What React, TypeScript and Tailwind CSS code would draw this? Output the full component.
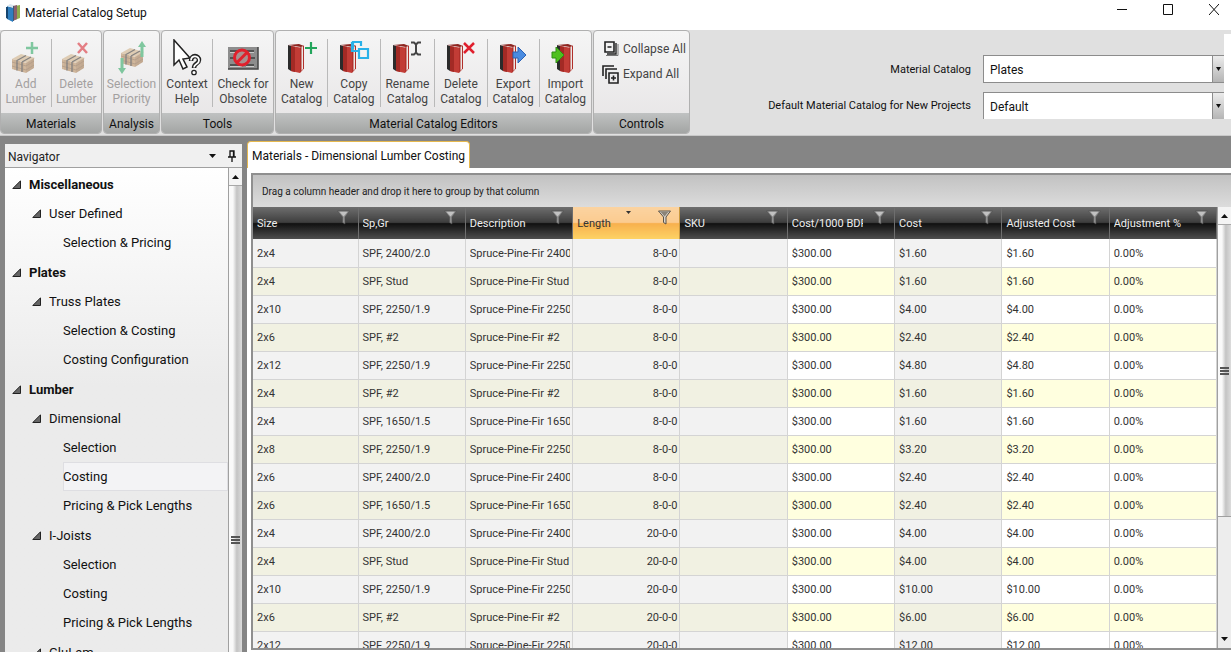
import type { ReactNode } from 'react'
import clsx from 'clsx'

type Row = { size: string; grade: string; desc: string; length: string; cost: string }

const rows: Row[] = [
  { size: '2x4', grade: 'SPF, 2400/2.0', desc: 'Spruce-Pine-Fir 2400/2.0', length: '8-0-0', cost: '$1.60' },
  { size: '2x4', grade: 'SPF, Stud', desc: 'Spruce-Pine-Fir Stud', length: '8-0-0', cost: '$1.60' },
  { size: '2x10', grade: 'SPF, 2250/1.9', desc: 'Spruce-Pine-Fir 2250/1.9', length: '8-0-0', cost: '$4.00' },
  { size: '2x6', grade: 'SPF, #2', desc: 'Spruce-Pine-Fir #2', length: '8-0-0', cost: '$2.40' },
  { size: '2x12', grade: 'SPF, 2250/1.9', desc: 'Spruce-Pine-Fir 2250/1.9', length: '8-0-0', cost: '$4.80' },
  { size: '2x4', grade: 'SPF, #2', desc: 'Spruce-Pine-Fir #2', length: '8-0-0', cost: '$1.60' },
  { size: '2x4', grade: 'SPF, 1650/1.5', desc: 'Spruce-Pine-Fir 1650/1.5', length: '8-0-0', cost: '$1.60' },
  { size: '2x8', grade: 'SPF, 2250/1.9', desc: 'Spruce-Pine-Fir 2250/1.9', length: '8-0-0', cost: '$3.20' },
  { size: '2x6', grade: 'SPF, 2400/2.0', desc: 'Spruce-Pine-Fir 2400/2.0', length: '8-0-0', cost: '$2.40' },
  { size: '2x6', grade: 'SPF, 1650/1.5', desc: 'Spruce-Pine-Fir 1650/1.5', length: '8-0-0', cost: '$2.40' },
  { size: '2x4', grade: 'SPF, 2400/2.0', desc: 'Spruce-Pine-Fir 2400/2.0', length: '20-0-0', cost: '$4.00' },
  { size: '2x4', grade: 'SPF, Stud', desc: 'Spruce-Pine-Fir Stud', length: '20-0-0', cost: '$4.00' },
  { size: '2x10', grade: 'SPF, 2250/1.9', desc: 'Spruce-Pine-Fir 2250/1.9', length: '20-0-0', cost: '$10.00' },
  { size: '2x6', grade: 'SPF, #2', desc: 'Spruce-Pine-Fir #2', length: '20-0-0', cost: '$6.00' },
  { size: '2x12', grade: 'SPF, 2250/1.9', desc: 'Spruce-Pine-Fir 2250/1.9', length: '20-0-0', cost: '$12.00' },
]

const columns = ['Size', 'Sp,Gr', 'Description', 'Length', 'SKU', 'Cost/1000 BDFT', 'Cost', 'Adjusted Cost', 'Adjustment %']

const tree = [
  { label: 'Miscellaneous', groups: [{ label: 'User Defined', items: ['Selection & Pricing'] }] },
  { label: 'Plates', groups: [{ label: 'Truss Plates', items: ['Selection & Costing', 'Costing Configuration'] }] },
  {
    label: 'Lumber',
    groups: [
      { label: 'Dimensional', items: ['Selection', 'Costing', 'Pricing & Pick Lengths'] },
      { label: 'I-Joists', items: ['Selection', 'Costing', 'Pricing & Pick Lengths'] },
      { label: 'GluLam', items: [] },
    ],
  },
]

function AppIcon() {
  return (
    <svg width="15" height="18" viewBox="0 0 15 18">
      <path d="M9 2l5-1v13l-5 2z" fill="#8fae4e" />
      <path d="M7 2l4-1v14l-4 2z" fill="#8d5f6b" />
      <path d="M4 1l4 1v15l-4-1z" fill="#3d5a78" />
      <path d="M1 2l6 2v14l-6-3z" fill="#2f7fc0" />
      <path d="M0 3l2 0v12l-2-1z" fill="#16456f" />
      <path d="M1 2l3-2 3 1v3z" fill="#d8e6f0" />
    </svg>
  )
}

function Boards() {
  return (
    <g>
      <path d="M0 5l9-5 14 4-8 5z" fill="#cfae82" />
      <path d="M0 5l14 4v10l-14-4z" fill="#b88a58" />
      <path d="M14 9l8-5v10l-8 5z" fill="#a3764a" />
      <path d="M0 8l14 4 8-5M0 12l14 4 8-5" stroke="#7a5533" strokeWidth=".8" fill="none" />
      <path d="M3 6v10M7 7v10M11 8v10M17 8v9M20 6v9" stroke="#92683d" strokeWidth=".7" />
      <path d="M5 6.500l9-5M5 6v10.500M10 8l9-5M10 8v10" stroke="#2f2b28" strokeWidth="1.400" fill="none" />
    </g>
  )
}

function AddLumberIcon() {
  return (
    <svg width="30" height="34" viewBox="0 0 30 34">
      <g transform="translate(1 13)"><Boards /></g>
      <path d="M21 1v12M15 7h12" stroke="#23a55c" strokeWidth="2.500" />
    </svg>
  )
}

function DeleteLumberIcon() {
  return (
    <svg width="30" height="34" viewBox="0 0 30 34">
      <g transform="translate(1 13)"><Boards /></g>
      <path d="M17 2l9 10M26 2l-9 10" stroke="#d8202a" strokeWidth="2.500" />
    </svg>
  )
}

function PriorityIcon() {
  return (
    <svg width="30" height="34" viewBox="0 0 30 34">
      <g transform="translate(4 7)"><Boards /></g>
      <path d="M25 0l4 6h-2.500v10h-3V6H21z" fill="#23a55c" />
      <path d="M5 33l-4-6h2.500V17h3v10H9z" fill="#23a55c" />
    </svg>
  )
}

function ContextIcon() {
  return (
    <svg width="30" height="38" viewBox="0 0 30 38">
      <path d="M2 1v25l5-5 4 9 4-2-4-8 7-1z" fill="#fff" stroke="#222" strokeWidth="1.500" />
      <path d="M19 22c0-7 8-6 8-1 0 4-5 3-5 8" fill="none" stroke="#222" strokeWidth="4.500" />
      <path d="M19 21.500c0-6 8-5 8 0 0 4-5 3-5 7" fill="none" stroke="#fff" strokeWidth="1.800" />
      <circle cx="22" cy="33.500" r="2.200" fill="#fff" stroke="#222" strokeWidth="1.300" />
    </svg>
  )
}

function ObsoleteIcon() {
  return (
    <svg width="32" height="24" viewBox="0 0 32 24">
      <path d="M1 1h30v22H1z" fill="#8d8d8d" />
      <path d="M31 1v22H1" fill="none" stroke="#444" strokeWidth="1.500" />
      <path d="M3 5h11M17 5h10M3 12h8M21 12h7M3 19h12M19 19h8" stroke="#3f3f3f" strokeWidth="1.500" />
      <path d="M3 6.500h11M17 6.500h10M3 20.500h12M19 20.500h8" stroke="#c9c9c9" />
      <circle cx="15" cy="11.500" r="7.500" fill="#a98f8f" stroke="#e0202c" strokeWidth="3" />
      <path d="M20 6.500l-10 10" stroke="#e0202c" strokeWidth="3" />
    </svg>
  )
}

function Book({ x = 0, children }: { x?: number; children?: ReactNode }) {
  return (
    <svg width="32" height="34" viewBox="0 0 32 34">
      <g transform={`translate(${x} 0)`}>
        <path d="M2 4l3 1v25l-3-2z" fill="#2b2b2b" />
        <path d="M2 4l11-1 5 2-3 1z" fill="#8d2520" />
        <path d="M5 5l9 1.500V32L5 30z" fill="#c23c36" />
        <path d="M5 5l4 .7V31l-4-1z" fill="#a32a25" />
        <path d="M14 6.500l4-2v23L14 32z" fill="#b1302b" />
        <path d="M15.500 6l1.500-.8V28l-1.500 1.700z" fill="#ece7e5" />
      </g>
      {children}
    </svg>
  )
}

function CollapseIcon() {
  return (
    <svg width="15" height="16" viewBox="0 0 15 16" fill="none" stroke="#222" strokeWidth="1.600">
      <path d="M1 1h9v10H1zM3.500 6h4" />
      <path d="M12 2v11H3" strokeWidth="1.400" />
      <path d="M2 14.500h12V3" stroke="#777" strokeWidth="1" />
    </svg>
  )
}

function ExpandIcon() {
  return (
    <svg width="17" height="19" viewBox="0 0 17 19" fill="none" stroke="#222" strokeWidth="1.600">
      <path d="M1 11V1h11M4 14V4h11" />
      <path d="M7 8h9v10H7zM9 13h5M11.500 10.500v5" />
    </svg>
  )
}

function Funnel({ active }: { active?: boolean }) {
  return (
    <svg width="13" height="15" viewBox="0 0 13 15">
      <path
        d="M.5 1h12L8 7v7l-2.500-1.500V7z"
        fill={active ? '#d9d4cc' : '#8f8f8f'}
        stroke={active ? '#5b5348' : '#4d4d4d'}
        strokeWidth={active ? 1 : 0.6}
      />
      <path d="M2.500 1.800h8L6.600 6.500z" fill={active ? '#8a8378' : '#c2c2c2'} />
    </svg>
  )
}

function Tool({ icon, lines, disabled }: { icon: ReactNode; lines: [string, string]; disabled?: boolean }) {
  return (
    <button
      disabled={disabled}
      className="flex flex-auto flex-col items-center border-l border-[#b9b9b9] text-[12px] leading-[15px] whitespace-nowrap text-[#444] first:border-l-0 disabled:text-[#a3a0a0]"
    >
      <span className={clsx('flex h-[38px] items-center', disabled && 'opacity-55')}>{icon}</span>
      <span>{lines[0]}</span>
      <span>{lines[1]}</span>
    </button>
  )
}

function RibbonGroup({ label, className, children }: { label: string; className: string; children: ReactNode }) {
  return (
    <section
      className={clsx(
        'flex shrink-0 flex-col overflow-hidden rounded-sm border border-[#b0b0b0] bg-linear-to-b from-[#f5f5f5] to-[#e6e4e5]',
        className,
      )}
    >
      <div className="flex flex-1 pt-2 pb-1.5">{children}</div>
      <h2 className="bg-linear-to-b from-[#c0c2c2] to-[#a3a5a4] pt-0.5 text-center text-[12px] leading-[18px] text-[#111]">
        {label}
      </h2>
    </section>
  )
}

function Ribbon() {
  return (
    <div className="flex shrink-0 gap-px border-b border-[#c8c8c8] bg-[#e0e0e0] pb-px">
      <RibbonGroup label="Materials" className="w-[102px]">
        <Tool icon={<AddLumberIcon />} lines={['Add', 'Lumber']} disabled />
        <Tool icon={<DeleteLumberIcon />} lines={['Delete', 'Lumber']} disabled />
      </RibbonGroup>
      <RibbonGroup label="Analysis" className="w-[57px]">
        <Tool icon={<PriorityIcon />} lines={['Selection', 'Priority']} disabled />
      </RibbonGroup>
      <RibbonGroup label="Tools" className="w-[113px]">
        <Tool icon={<ContextIcon />} lines={['Context', 'Help']} />
        <Tool icon={<ObsoleteIcon />} lines={['Check for', 'Obsolete']} />
      </RibbonGroup>
      <RibbonGroup label="Material Catalog Editors" className="w-[317px]">
        <Tool
          lines={['New', 'Catalog']}
          icon={<Book><path d="M25 1v12M19 7h12" stroke="#23a55c" strokeWidth="2.200" /></Book>}
        />
        <Tool
          lines={['Copy', 'Catalog']}
          icon={
            <Book>
              <path d="M15 8V1h8v4M14 1v9h6" fill="none" stroke="#29b1e8" strokeWidth="2.200" />
              <path d="M21 8h9v9h-9z" fill="#f2f2f2" stroke="#29b1e8" strokeWidth="2.200" />
            </Book>
          }
        />
        <Tool
          lines={['Rename', 'Catalog']}
          icon={
            <Book>
              <path d="M20 1.500h3l2 2 2-2h3M20 13.500h3l2-2 2 2h3M25 3v9" fill="none" stroke="#444" strokeWidth="2" />
            </Book>
          }
        />
        <Tool
          lines={['Delete', 'Catalog']}
          icon={<Book><path d="M19 2l10 10M29 2L19 12" stroke="#e01f2d" strokeWidth="2.500" /></Book>}
        />
        <Tool
          lines={['Export', 'Catalog']}
          icon={<Book x={1}><path d="M16 11h5V6l8 8-8 8v-5h-5z" fill="#4a8be0" stroke="#2c62b4" /></Book>}
        />
        <Tool
          lines={['Import', 'Catalog']}
          icon={<Book x={6}><path d="M3 11h4V6l8 8-8 8v-5H3z" fill="#4fc01f" stroke="#2f8f14" /></Book>}
        />
      </RibbonGroup>
      <RibbonGroup label="Controls" className="w-[97px]">
        <div className="flex flex-col gap-[5px] pl-2">
          <button className="flex h-5 items-center gap-1 text-[12px] whitespace-nowrap text-[#444]">
            <span className="w-[17px] shrink-0 pl-0.5"><CollapseIcon /></span>
            Collapse All
          </button>
          <button className="flex h-5 items-center gap-1 text-[12px] whitespace-nowrap text-[#444]">
            <ExpandIcon />
            Expand All
          </button>
        </div>
      </RibbonGroup>
      <form className="mt-1 mb-[15px] flex flex-1 items-end justify-end border-r-[7px] border-white text-[12px] text-[#111]">
        <div className="grid grid-cols-[auto_241px] items-center gap-x-3 gap-y-[9px]">
          <label htmlFor="catalog" className="pt-0.5 text-right text-[11px]">Material Catalog</label>
          <Picker id="catalog" value="Plates" className="h-7 border-b" />
          <label htmlFor="default-catalog" className="pt-0.5 text-right text-[11px]">
            Default Material Catalog for New Projects
          </label>
          <Picker id="default-catalog" value="Default" className="h-[27px]" />
        </div>
      </form>
    </div>
  )
}

function Picker({ id, value, className }: { id: string; value: string; className: string }) {
  return (
    <div className={clsx('flex border-t border-l border-[#8c8c8c] bg-white', className)}>
      <select id={id} defaultValue={value} className="min-w-0 flex-1 appearance-none bg-transparent px-1.5 pt-0.5 outline-none">
        <option>{value}</option>
      </select>
      <span className="pointer-events-none flex w-3 items-center justify-center border-l border-[#8c8c8c] bg-linear-to-b from-[#ececec] to-[#b5b5b5]">
        <svg width="5" height="4" viewBox="0 0 5 4"><path d="M0 0h5L2.500 4z" fill="#111" /></svg>
      </span>
    </div>
  )
}

function Triangle() {
  return (
    <svg width="9" height="9" viewBox="0 0 9 9" className="shrink-0">
      <path d="M8.500.8v7.700H.8z" fill="#666" stroke="#222" />
    </svg>
  )
}

function ScrollBar({ thumb, down }: { thumb: string; down?: boolean }) {
  return (
    <div className="flex w-3.5 shrink-0 flex-col border-l border-[#a0a0a0] bg-[#ededed]">
      <button aria-label="Scroll up" className="flex h-[18px] shrink-0 items-center justify-center border-b border-[#a8a8a8] bg-[#f4f4f4]">
        <svg width="7" height="4" viewBox="0 0 7 4"><path d="M0 4h7L3.500 0z" fill="#111" /></svg>
      </button>
      <div
        className={clsx(
          'flex shrink-0 flex-col items-center justify-center gap-px border-b border-[#a0a0a0] bg-linear-to-r from-[#fafafa] from-30% via-[#c4c4c4] via-60% to-[#dcdcdc]',
          thumb,
        )}
      >
        <span className="h-0.5 w-[9px] bg-[#555]" />
        <span className="h-0.5 w-[9px] bg-[#555]" />
        <span className="h-0.5 w-[9px] bg-[#555]" />
      </div>
      {down && (
        <button aria-label="Scroll down" className="mt-auto flex h-[18px] shrink-0 items-center justify-center">
          <svg width="7" height="4" viewBox="0 0 7 4"><path d="M0 0h7L3.500 4z" fill="#111" /></svg>
        </button>
      )}
    </div>
  )
}

function Navigator() {
  return (
    <aside className="mt-2 flex w-[237px] shrink-0 flex-col bg-[#f0f0f0]">
      <header className="flex h-6 shrink-0 items-center border-b border-[#a0a0a0] pr-1.5 pl-[3px] text-[12px] text-[#222]">
        <h2 className="flex-1 pt-0.5">Navigator</h2>
        <button aria-label="Window position">
          <svg width="7" height="4" viewBox="0 0 7 4"><path d="M0 0h7L3.500 4z" fill="#111" /></svg>
        </button>
        <button aria-label="Pin" className="ml-3">
          <svg width="8" height="12" viewBox="0 0 8 12" fill="none" stroke="#111">
            <path d="M2 6.500V1h4v5.500M0 7h8M4 7v5M5.500 1v6" strokeWidth="1.300" />
          </svg>
        </button>
      </header>
      <div className="flex min-h-0 flex-1">
        <nav className="flex-1 overflow-hidden bg-linear-to-b from-white to-[#ebebeb] to-45% pt-0.5 text-[13px] leading-[29px] text-[#111]">
          <ul>
            {tree.map((section) => (
              <li key={section.label}>
                <div className="flex items-center gap-2 pl-[7px] font-bold">
                  <Triangle />
                  {section.label}
                </div>
                <ul>
                  {section.groups.map((group) => (
                    <li key={group.label} className="pb-px">
                      <div className="flex items-center gap-2 pl-[27px]">
                        <Triangle />
                        {group.label}
                      </div>
                      <ul className="pl-[58px]">
                        {group.items.map((item) => (
                          <li key={item}>
                            <a
                              href="#"
                              className={clsx(
                                'block',
                                group.label === 'Dimensional' &&
                                  item === 'Costing' &&
                                  'bg-[#f3f3f5] inset-ring inset-ring-[#dedee2]',
                              )}
                            >
                              {item}
                            </a>
                          </li>
                        ))}
                      </ul>
                    </li>
                  ))}
                </ul>
              </li>
            ))}
          </ul>
        </nav>
        <ScrollBar thumb="h-[708px]" />
      </div>
    </aside>
  )
}

function CostTable() {
  return (
    <table className="w-full table-fixed border-collapse text-[11px] text-[#333]">
      <thead>
        <tr className="h-8">
          {columns.map((name) => {
            const sorted = name === 'Length'
            return (
              <th
                key={name}
                className={clsx(
                  'border-r p-0 font-normal first:w-[105px]',
                  sorted
                    ? 'border-[#c9983e] bg-[linear-gradient(#fbd3a0,#fbcb90_48%,#f7b04e_52%,#fdd264)] text-[#333]'
                    : 'border-[#6e6e6e] bg-[linear-gradient(#6e6e6e,#3e3e3e_48%,#111_52%,#4e4e4e)] text-[#eee]',
                )}
              >
                <div className="relative flex h-8 items-start gap-2.5 pr-2 pl-1">
                  <span className="min-w-0 flex-1 overflow-hidden pt-[9px] text-left whitespace-nowrap">{name}</span>
                  {sorted && (
                    <svg width="5" height="3" viewBox="0 0 5 3" className="absolute top-1 left-1/2">
                      <path d="M0 0h5L2.500 3z" fill="#333" />
                    </svg>
                  )}
                  <button aria-label={`Filter ${name}`} className="mt-[3px] shrink-0">
                    <Funnel active={sorted} />
                  </button>
                </div>
              </th>
            )
          })}
        </tr>
      </thead>
      <tbody>
        {rows.map((row, i) => {
          const odd = i % 2 === 1
          const locked = odd ? 'bg-[#f1f1e2]' : 'bg-[#f2f2f2]'
          const open = odd ? 'bg-[#ffffdf]' : 'bg-white'
          const cell = 'overflow-hidden border-r border-b border-[#d4d4d4] pt-0.5 pr-0.5 pb-0 pl-1 whitespace-nowrap'
          return (
            <tr key={i} className="h-7">
              <td className={clsx(cell, locked)}>{row.size}</td>
              <td className={clsx(cell, locked)}>{row.grade}</td>
              <td className={clsx(cell, locked)}>
                <div className="overflow-hidden">{row.desc}</div>
              </td>
              <td className={clsx(cell, locked, 'text-right')}>{row.length}</td>
              <td className={clsx(cell, locked)} />
              <td className={clsx(cell, open)}>$300.00</td>
              <td className={clsx(cell, locked)}>{row.cost}</td>
              <td className={clsx(cell, open)}>{row.cost}</td>
              <td className={clsx(cell, open)}>0.00%</td>
            </tr>
          )
        })}
      </tbody>
    </table>
  )
}

export default function App() {
  return (
    <div className="flex h-screen flex-col overflow-hidden bg-[#858585] font-[Roboto,'Open_Sans',sans-serif]">
      <header className="flex h-[30px] shrink-0 items-start bg-white pt-1 pr-3 pl-1.5">
        <AppIcon />
        <h1 className="flex-1 pl-1 text-[12px] leading-[18px] text-[#111]">Material Catalog Setup</h1>
        <div className="flex gap-9">
          <button aria-label="Minimize">
            <svg width="10" height="11" viewBox="0 0 10 11"><path d="M0 5.500h10" stroke="#111" /></svg>
          </button>
          <button aria-label="Maximize">
            <svg width="10" height="11" viewBox="0 0 10 11"><path d="M.5.500h9v10h-9z" fill="none" stroke="#111" /></svg>
          </button>
          <button aria-label="Close">
            <svg width="10" height="11" viewBox="0 0 10 11"><path d="M0 0l10 11M10 0L0 11" stroke="#111" /></svg>
          </button>
        </div>
      </header>
      <Ribbon />
      <div className="flex min-h-0 flex-1 gap-[5px] pl-[5px]">
        <Navigator />
        <main className="flex min-w-0 flex-1 flex-col pt-[5px]">
          <div className="flex shrink-0">
            <h2 className="rounded-t-sm border border-b-0 border-[#e5b84e] bg-white px-1 pt-0.5 text-[12px] leading-6 text-[#111]">
              Materials - Dimensional Lumber Costing
            </h2>
          </div>
          <div className="flex min-h-0 flex-1 flex-col bg-white pt-[5px] pb-0.5 pl-1">
            <div className="flex min-h-0 flex-1 flex-col border-2 border-r-0 border-[#8f8f8f]">
              <p className="h-8 shrink-0 bg-linear-to-b from-[#c2c2c2] to-[#dcdcdc] pl-[9px] text-[10px] leading-[34px] text-[#222]">
                Drag a column header and drop it here to group by that column
              </p>
              <div className="flex min-h-0 flex-1">
                <div className="min-w-0 flex-1 overflow-hidden">
                  <CostTable />
                </div>
                <ScrollBar thumb="h-[292px]" down />
              </div>
            </div>
          </div>
        </main>
      </div>
    </div>
  )
}
